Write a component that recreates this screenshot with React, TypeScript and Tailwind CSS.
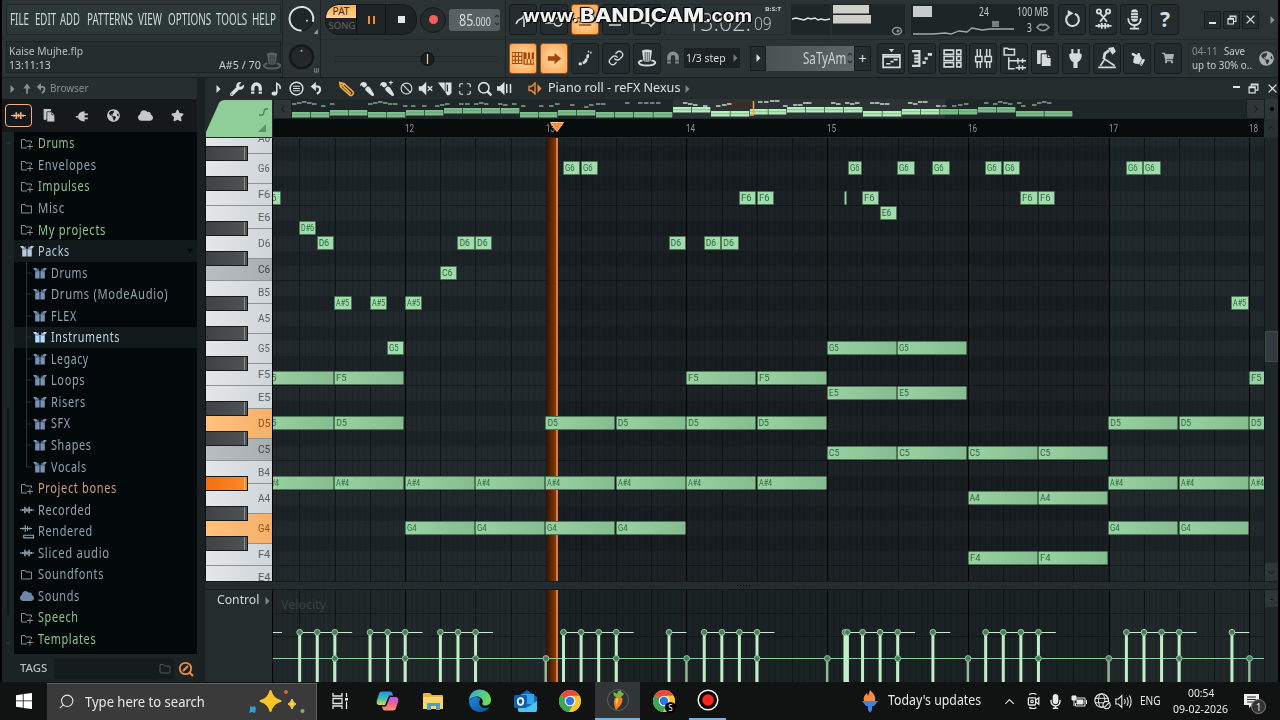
import React, { useLayoutEffect, useRef, useState } from "react";
import {
  Ban,
  ChevronDown,
  ChevronLeft,
  ChevronRight,
  ChevronUp,
  Folder,
  Link,
  Maximize,
  Search,
} from "lucide-react";
import {
  FaCloud,
  FaGlobeAmericas,
  FaHandPointLeft,
  FaMicrophone,
  FaPaintBrush,
  FaShoppingCart,
  FaStar,
  FaWrench,
} from "react-icons/fa";

type FitProps = { w: number; className?: string; children: React.ReactNode };

// Condensed label: scales its text horizontally to fill a fixed width.
function Fit({ w, className = "", children }: FitProps) {
  const ref = useRef<HTMLSpanElement>(null);
  const [scale, setScale] = useState(1);
  useLayoutEffect(() => {
    if (ref.current) setScale(w / ref.current.offsetWidth);
  }, [w]);
  return (
    <span className={`inline-block shrink-0 whitespace-nowrap ${className}`} style={{ width: w }}>
      <span ref={ref} className="inline-block origin-left" style={{ transform: `scaleX(${scale})` }}>
        {children}
      </span>
    </span>
  );
}

type SvgProps = { size?: number; className?: string; children: React.ReactNode };

function Glyph({ size = 20, className = "", children }: SvgProps) {
  return (
    <svg
      width={size}
      height={size}
      viewBox="0 0 20 20"
      fill="none"
      stroke="currentColor"
      strokeWidth="1.6"
      className={`shrink-0 ${className}`}
    >
      {children}
    </svg>
  );
}

const Arrow = ({ className = "" }: { className?: string }) => (
  <svg width="5" height="8" viewBox="0 0 5 8" className={`shrink-0 fill-current ${className}`}>
    <path d="M0.5 0 L4.5 4 L0.5 8Z" />
  </svg>
);

const Magnet = ({ size = 16, className = "" }) => (
  <Glyph size={size} className={className}>
    <path d="M5 17V9a5 5 0 0 1 10 0v8" strokeWidth="4.4" />
    <path d="M2 13.6h6M12 13.6h6" stroke="#22292b" strokeWidth="1.2" />
  </Glyph>
);

const Undo = ({ size = 15 }) => (
  <Glyph size={size}>
    <path d="M7 7h4.500c5 0 6 8-1 11" strokeWidth="3.200" />
    <path d="M9 0v14L1 7Z" fill="currentColor" stroke="none" />
  </Glyph>
);

const Wave = ({ size = 17, className = "" }) => (
  <Glyph size={size} className={className}>
    <path d="M0 10h20" strokeWidth="1.400" />
    <path d="M4 8.500v3M7 5.500v9M10 7.500v5M13 5.500v9M16 8.500v3" strokeWidth="2.200" />
  </Glyph>
);

const Pages = ({ size = 19 }) => (
  <Glyph size={size}>
    <path d="M6 15H3V2h8v2" fill="currentColor" />
    <path d="M6.500 5H13l4 4v9.500H6.500Z" fill="currentColor" stroke="#1b2224" strokeWidth="1" />
    <path d="M13 5v4h4" stroke="#1b2224" strokeWidth="1" />
  </Glyph>
);

const Hat = ({ className = "" }) => (
  <Glyph size={20} className={className}>
    <path d="M5 2.500q5-2 10 0L13.500 13q-3.500 1.500-7 0Z" fill="currentColor" stroke="none" />
    <path d="M8.200 4v9M10.200 4v9.500M12.200 4v9" stroke="#30383a" strokeWidth=".8" />
    <path d="M5.500 12.500C0 13 0 17.500 10 17.500S20 13 14.500 12.500" strokeWidth="2" />
  </Glyph>
);

const Restore = ({ size = 12 }) => (
  <Glyph size={size}>
    <path d="M6 7V2h12v11h-5M2 7h11v11H2Z" strokeWidth="2.2" />
    <path d="M2 8.5h11M6 3.5h12" strokeWidth="2.2" />
  </Glyph>
);

const Cross = ({ size = 12 }) => (
  <Glyph size={size}>
    <path d="M3 3l14 14M17 3L3 17" strokeWidth="2.4" />
  </Glyph>
);

function ToolButton({ active, children }: { active?: boolean; children?: React.ReactNode }) {
  return (
    <div
      className={`flex h-[31px] w-[28px] shrink-0 items-center justify-center rounded-[3px] border ${
        active
          ? "border-[#9c4d12] bg-[radial-gradient(#ffdfa6,#ffa351)] text-[#a34608]"
          : "border-[#171d1f] bg-[#252c2f] text-[#d5dbdc]"
      }`}
    >
      {children}
    </div>
  );
}

const menus: [string, number, number][] = [
  ["FILE", 19, 6],
  ["EDIT", 21, 4],
  ["ADD", 20, 7],
  ["PATTERNS", 46, 5],
  ["VIEW", 24, 6],
  ["OPTIONS", 43, 5],
  ["TOOLS", 31, 5],
  ["HELP", 24, 0],
];

function MenuPanel() {
  return (
    <div className="w-[281px] shrink-0 border-r border-[#1d2426] pl-1">
      <div className="mt-[4px] flex h-[31px] w-[275px] items-center border border-[#1f2728] bg-[#2d3838] pl-[3px] text-[16.5px] leading-none text-[#d3d9d9]">
        {menus.map(([name, w, gap]) => (
          <React.Fragment key={name}>
            <Fit w={w}>{name}</Fit>
            <span className="shrink-0" style={{ width: gap }} />
          </React.Fragment>
        ))}
      </div>
      <div className="mt-[6px] flex h-[32px] w-[275px] items-stretch border border-[#1a2122] bg-[#262d2f] pl-[2px] text-[11px] text-[#c9cfd0]">
        <div className="flex flex-1 flex-col leading-[14px]">
          <Fit w={74} className="mt-[1.500px] text-[#b9bfc0]">Kaise Mujhe.flp</Fit>
          <Fit w={42}>13:11:13</Fit>
        </div>
        <Fit w={42} className="mt-[15.500px] mr-[2px] leading-[14px]">A#5 / 70</Fit>
        <Hat className="mt-[9px] mr-[-2px] ml-[-1px] text-[#5a6163]" />
      </div>
    </div>
  );
}

function Knobs() {
  return (
    <div className="flex w-[38px] shrink-0 flex-col items-center border-r border-[#1d2426]">
      <svg width="36" height="39" viewBox="0 0 36 39">
        <circle cx="17.500" cy="19" r="12" fill="#202729" stroke="#15191a" />
        <path d="M17.500 31A12 12 0 1 1 29 22" fill="none" stroke="#dde2e2" strokeWidth="2" />
        <circle cx="23" cy="21" r="0.9" fill="#fff" />
        <path d="M30 34.5h4v-5Z" fill="#9ba1a2" />
      </svg>
      <svg width="36" height="39" viewBox="0 0 36 39">
        <circle cx="17.500" cy="18" r="15" fill="none" stroke="#3b4244" strokeDasharray="1 3.5" />
        <circle cx="17.500" cy="18" r="11.500" fill="#23292b" stroke="#15191a" strokeWidth="2.500" />
        <circle cx="17.500" cy="12" r="1" fill="#a9afb0" />
        <path d="M30.500 29.500v4h4v-4M32.500 29.500v4" stroke="#7b8183" fill="none" />
      </svg>
    </div>
  );
}

function Transport() {
  return (
    <div className="flex w-[185px] shrink-0 flex-col border-r border-[#1d2426]">
      <div className="flex h-[39px] items-center pl-[4px]">
        <div className="flex h-[31px] w-[92px] overflow-hidden rounded-[14px] border border-[#15191b] bg-[#1e2426]">
          <div className="flex w-[31px] flex-col border-r border-[#111] text-center text-[10px]">
            <span className="h-[13px] rounded-tl-[12px] bg-[linear-gradient(#ffb054,#ffd394)] leading-[13px] text-[#46290b]">
              PAT
            </span>
            <span className="pl-[2px] text-[9.5px] leading-[16px] text-[#60686a]">SONG</span>
          </div>
          <div className="flex w-[29px] items-center justify-center gap-[3px] border-r border-[#111]">
            <i className="h-[8px] w-[2px] bg-[#f58a3a]" />
            <i className="h-[8px] w-[2px] bg-[#f58a3a]" />
          </div>
          <div className="flex flex-1 items-center justify-center">
            <i className="h-[7px] w-[7px] bg-[#e3e7e8]" />
          </div>
        </div>
        <div className="ml-[3px] flex h-[26px] w-[26px] items-center justify-center rounded-full border border-[#14191a] bg-[#252c2e]">
          <i className="h-[9px] w-[9px] rounded-full bg-[#f45e5c]" />
        </div>
        <div className="ml-[3px] flex h-[22px] w-[51px] items-center rounded-[3px] bg-[#576062] pl-[10px] text-[#d8dcdc]">
          <Fit w={14} className="text-[17px] leading-none">85</Fit>
          <Fit w={18} className="mt-[3px] text-[13px] leading-none">.000</Fit>
          <span className="ml-[3px] flex flex-col gap-[2px] text-[#2c3335]">
            <ChevronUp size={6} strokeWidth={5} />
            <ChevronDown size={6} strokeWidth={5} />
          </span>
        </div>
      </div>
      <div className="flex flex-1 items-center border-t border-[#242b2d] pl-[14px]">
        <svg width="162" height="20" viewBox="0 0 162 20">
          <path d="M0 7.500h162M0 12.500h162" stroke="#22292b" />
          <circle cx="92.500" cy="10" r="6.500" fill="#1a1e1f" stroke="#0e1112" />
          <path d="M92.500 5v10" stroke="#e0c2a0" strokeWidth="1.3" />
        </svg>
      </div>
    </div>
  );
}

function UpperTools() {
  return (
    <div className="flex h-[39px] items-center">
      <div className="flex gap-[3px] pl-[3px]">
        <ToolButton><Glyph><path d="M3 14C6 6 9 12 11 5M11 3v14M14 5v8" /></Glyph></ToolButton>
        <ToolButton><Glyph><path d="M1 13h9" /><circle cx="14" cy="12" r="4" /></Glyph></ToolButton>
        <ToolButton active><Glyph><path d="M2 8h16M4 12h12M4 15h12" /></Glyph></ToolButton>
        <ToolButton><Glyph><path d="M3 15h12M8 11h6" /></Glyph></ToolButton>
        <ToolButton><Glyph><path d="M4 13h8M10 12l4 4 4-4" /></Glyph></ToolButton>
      </div>
      <div className="ml-[3px] flex h-[31px] w-[122px] border border-[#252e2f] bg-[#2c3536] text-[#c3cbcc]">
        <Fit w={64} className="mt-[1px] ml-[22px] font-['Open_Sans'] text-[25px] leading-[31px] font-light">13:02:</Fit>
        <Fit w={18} className="mt-[8px] ml-[3px] font-['Open_Sans'] text-[19px] leading-[20px] font-light">09</Fit>
        <span className="relative w-0">
          <Fit w={16} className="absolute top-0 left-[-7px] text-[6px] leading-[8px] font-bold">B:S:T</Fit>
        </span>
      </div>
      <div className="ml-[5px] h-[31px] w-[114px] shrink-0 bg-[#1f2628]">
        <svg width="116" height="31" viewBox="0 0 116 31">
          <path d="M1 15l4-1 4 1 4 1 4-2 3 1 4-1 3 2 3-1 4 1 5-1" fill="none" stroke="#dce1e1" strokeWidth="1.500" />
          <path d="M40 0v31" stroke="#30383a" />
          <path d="M42 1h36v8.500H42zM42 11h38v8.500H42z" fill="#cfd0ca" />
          <ellipse cx="106" cy="27" rx="4.500" ry="3.500" fill="none" stroke="#8e9597" strokeWidth="1.500" />
          <circle cx="107" cy="27" r="1.500" fill="#8e9597" />
        </svg>
      </div>
      <div className="ml-[6px] flex h-[32px] w-[143px] shrink-0 bg-[#1e2526] text-[#c8cecf]">
        <svg width="106" height="32" viewBox="0 0 106 32" className="shrink-0">
          <path d="M2 2h19v11H2z" fill="#c8cbce" />
          <path d="M2 30h20l12-1 6 1 8-3 8 1 5-4 10 2 8-1h24" fill="none" stroke="#a3aaab" strokeWidth="1.300" />
          <path d="M81 17h7v6h-7z" fill="#777e80" />
        </svg>
        <div className="relative w-0">
          <Fit w={10} className="absolute top-0 left-[-38px] text-[12px] leading-[15px]">24</Fit>
        </div>
        <div className="flex w-[36px] flex-col text-[12px] leading-[15px]">
          <Fit w={31}>100 MB</Fit>
          <span className="mt-px flex items-center">
            <Fit w={5} className="ml-[10px]">3</Fit>
            <svg width="14" height="9" viewBox="0 0 14 9" className="ml-[4px]">
              <path d="M1 4.500Q4 0 7 2Q10 0 13 4.500Q7 11 1 4.500Z" fill="none" stroke="#8a9193" strokeWidth="1.700" />
            </svg>
          </span>
        </div>
      </div>
      <div className="ml-[4px] flex gap-[3px]">
        <ToolButton>
          <Glyph size={19}><path d="M6.500 4.500a6.700 6.700 0 1 0 6 -.5" strokeWidth="2.200" /><path d="M5 0v7l6-3.500Z" fill="currentColor" stroke="none" /></Glyph>
        </ToolButton>
        <ToolButton>
          <Glyph size={23}><circle cx="6" cy="3" r="1.800" /><circle cx="14" cy="3" r="1.800" /><path d="M7 4.500l6 7.500M13 4.500L7 12M3 15.500h14M6 14v3M8.500 13v5M11.500 13v5M14 14v3" /></Glyph>
        </ToolButton>
        <ToolButton>
          <Glyph size={23}><rect x="7" y="1" width="6" height="11" rx="3" fill="currentColor" stroke="none" /><path d="M7 4h6M7 6.500h6M7 9h6" stroke="#333" strokeWidth=".7" /><path d="M4.500 9c0 8 11 8 11 0M10 15v3M6 18h8" /></Glyph>
        </ToolButton>
        <ToolButton><span className="text-[21px] leading-none font-bold">?</span></ToolButton>
      </div>
      <div className="ml-[25px] flex items-center gap-[2px] text-[#dfe4e4]">
        <span className="flex h-[18px] w-[17px] items-end justify-center border border-[#181e20] bg-[#252c2e] pb-[4px]"><i className="h-[2px] w-[7px] bg-[#dfe4e4]" /></span>
        <span className="flex h-[18px] w-[17px] items-center justify-center border border-[#181e20] bg-[#252c2e]"><Restore size={10} /></span>
        <span className="flex h-[18px] w-[17px] items-center justify-center border border-[#181e20] bg-[#252c2e]"><Cross size={11} /></span>
      </div>
      <Arrow className="ml-[11px] text-[#8c9395]" />
    </div>
  );
}

function LowerTools() {
  return (
    <div className="flex h-[37px] items-center border-t border-[#242b2d]">
      <div className="flex gap-[3px] pl-[3px]">
        <ToolButton active>
          <Glyph size={22}><path d="M0 5h9v10H0ZM3 5v10M6 5v10M0 8.500h9M0 12h9" strokeWidth="1" /><path d="M11 4.500v11h9v-11" strokeWidth="1.200" /><path d="M11 5h2.300v6H11zM14.500 5h1.800v6h-1.800zM17.800 5H20v6h-2.200z" fill="currentColor" stroke="none" /><path d="M13.800 11v4M17 11v4" strokeWidth="1.200" /></Glyph>
        </ToolButton>
        <ToolButton active>
          <Glyph size={15}><path d="M1 7h9V2.500l9 7.500-9 7.500V13H1Z" fill="currentColor" stroke="none" /></Glyph>
        </ToolButton>
        <ToolButton>
          <Glyph size={18}><path d="M3 16.500h3.500M7.500 15.500q4-1 4-5" strokeWidth="3" /><path d="M11.500 11V6.500l3-1v4Z" fill="currentColor" stroke="none" /><path d="M14 2v2M16.500 3v2" strokeWidth="1.600" /></Glyph>
        </ToolButton>
        <ToolButton><Link size={16} /></ToolButton>
        <ToolButton><Hat /></ToolButton>
      </div>
      <Magnet size={16} className="ml-[4px] text-[#899092]" />
      <div className="ml-[3px] flex h-[20px] w-[56px] items-center bg-[#1c2224] pl-[2px] text-[11.500px] text-[#d6dbdc]">
        <Fit w={40}>1/3 step</Fit>
        <Arrow className="ml-[7px] text-[#727a7c]" />
      </div>
      <div className="ml-[10px] flex h-[25px] items-center">
        <span className="flex h-full w-[16px] items-center justify-center border border-[#171c1e] bg-[#262d2f] text-[#d6dbdc]"><Arrow /></span>
        <span className="flex h-full w-[88px] items-center justify-end bg-[linear-gradient(90deg,#4a5254,#5d6567)] text-[17px] text-[#ccd2d2]">
          <Fit w={43}>SaTyAm</Fit>
          <span className="mr-[1px] ml-[1px] flex flex-col gap-[2px] text-[#2c3335]">
            <ChevronUp size={6} strokeWidth={5} />
            <ChevronDown size={6} strokeWidth={5} />
          </span>
        </span>
        <span className="flex h-full w-[17px] items-center justify-center border border-[#171c1e] bg-[#262d2f] text-[14px] text-[#e0e4e4]">+</span>
      </div>
      <div className="ml-[6px] flex gap-[2.800px]">
        <ToolButton><Glyph size={21}><path d="M2 6.500h16v12H2ZM2 8.500h16" /><path d="M7.500 1h5L10 4Z" fill="currentColor" stroke="none" /><path d="M5 15h4M9 13h3M12 11h4" /></Glyph></ToolButton>
        <ToolButton><Glyph size={21}><path d="M1 3h7v14H1M3 7h5M3 10h5M3 13h5" strokeWidth="2" /><path d="M11 14h3M13 10h3M16 6h4" strokeWidth="2.600" /></Glyph></ToolButton>
        <ToolButton><Glyph size={21}><path d="M2 2h9v4H2ZM2 8h9v4H2ZM2 14h9v4H2ZM14 2h4v4h-4ZM14 8h4v4h-4ZM14 14h4v4h-4Z" strokeWidth="1.500" /></Glyph></ToolButton>
        <ToolButton><Glyph size={21}><path d="M4 1v7M4 13v6M7 1v7M7 13v6M13 1v7M13 13v6M16 1v7M16 13v6M2.500 8h6v5h-6ZM11.500 8h6v5h-6Z" strokeWidth="1.400" /></Glyph></ToolButton>
        <ToolButton><Glyph size={23}><path d="M1 1h3l1 1h5v5H1ZM5 9v10h5M5 12h5M10 12h10M13 9.500v5M17 10v4M11 18h9M14 15.500v5M17 16v4" strokeWidth="1.300" /></Glyph></ToolButton>
        <ToolButton><Pages /></ToolButton>
        <ToolButton>
          <Glyph size={21}><path d="M6 1h2v4h4V1h2v4l2 1q0 6-4 7.500V19H8v-5.500Q4 12 4 6l2-1Z" fill="currentColor" stroke="none" /></Glyph>
        </ToolButton>
        <ToolButton>
          <Glyph size={22}><path d="M2 18.500h16M4 17l4-6 9 6" strokeWidth="1.600" /><path d="M7 11l1-5 4-3" strokeWidth="2.400" /><path d="M11 1l5-1 2 4-3 3-2-3Z" fill="currentColor" stroke="none" /></Glyph>
        </ToolButton>
        <ToolButton><FaHandPointLeft size={15} className="rotate-[28deg]" /></ToolButton>
        <ToolButton><FaShoppingCart size={12} className="text-[#aab1b3]" /></ToolButton>
      </div>
      <div className="ml-[6px] flex h-[31px] w-[89px] items-center border border-[#252d2f] bg-[#2b3435] pl-[3px] text-[11px] text-[#c5cbcc]">
        <div className="flex w-[64px] flex-col leading-[14px]">
          <span className="flex gap-[6px]">
            <Fit w={26} className="text-[#858d8f]">04-11</Fit>
            <Fit w={21}>Save</Fit>
          </span>
          <Fit w={60}>up to 30% o..</Fit>
        </div>
        <FaGlobeAmericas size={15} className="ml-[3px] text-[#a9b0b1]" />
      </div>
    </div>
  );
}

function Watermark() {
  return (
    <div className="absolute top-[4px] left-[523px] z-20 flex items-center text-[#f2f2f2] [text-shadow:0_0_2px_#000,1px_1px_1px_#000,-1px_-1px_1px_#000]">
      <Fit w={56} className="font-['Inter'] text-[18px] leading-[24px] font-bold">www.</Fit>
      <Fit w={124} className="ml-[1px] font-['Inter'] text-[19px] leading-[24px] font-extrabold">BANDICAM</Fit>
      <Fit w={47} className="ml-[1px] font-['Inter'] text-[18px] leading-[24px] font-bold">.com</Fit>
    </div>
  );
}

function Toolbar() {
  return (
    <header className="relative flex h-[78px] shrink-0 border-b border-[#191f21] bg-[#2c3335]">
      <MenuPanel />
      <Knobs />
      <Transport />
      <div className="flex flex-col">
        <UpperTools />
        <LowerTools />
      </div>
    </header>
  );
}

type Item = { name: string; w: number; icon: string; tone?: string; sub?: boolean; last?: boolean };

const green = "text-[#8cc396]";
const items: Item[] = [
  { name: "Drums", w: 37, icon: "add", tone: green },
  { name: "Envelopes", w: 59, icon: "add" },
  { name: "Impulses", w: 52, icon: "add", tone: green },
  { name: "Misc", w: 27, icon: "folder" },
  { name: "My projects", w: 68, icon: "add", tone: green },
  { name: "Packs", w: 32, icon: "pack", tone: "text-[#b5cbe0]" },
  { name: "Drums", w: 37, icon: "pack", sub: true },
  { name: "Drums (ModeAudio)", w: 117, icon: "pack", sub: true },
  { name: "FLEX", w: 26, icon: "pack", sub: true },
  { name: "Instruments", w: 69, icon: "pack", sub: true, tone: "text-[#c3d8ea]" },
  { name: "Legacy", w: 38, icon: "pack", sub: true },
  { name: "Loops", w: 34, icon: "pack", sub: true },
  { name: "Risers", w: 35, icon: "pack", sub: true },
  { name: "SFX", w: 20, icon: "pack", sub: true },
  { name: "Shapes", w: 41, icon: "pack", sub: true },
  { name: "Vocals", w: 36, icon: "pack", sub: true, last: true },
  { name: "Project bones", w: 79, icon: "add", tone: "text-[#cf9c85]" },
  { name: "Recorded", w: 54, icon: "wave" },
  { name: "Rendered", w: 55, icon: "render" },
  { name: "Sliced audio", w: 72, icon: "wave" },
  { name: "Soundfonts", w: 66, icon: "folder" },
  { name: "Sounds", w: 42, icon: "cloud" },
  { name: "Speech", w: 41, icon: "add", tone: green },
  { name: "Templates", w: 58, icon: "add", tone: green },
];

function ItemIcon({ icon }: { icon: string }) {
  if (icon === "pack")
    return (
      <svg width="14" height="12" viewBox="0 0 14 12" className="shrink-0 fill-current">
        <path d="M0 1H3.200L5.500 3.700H2ZM14 1H10.800L8.500 3.700H12Z" />
        <path d="M2.200 4.200H6.600V11.500H2.200ZM7.400 4.200H11.800V11.500H7.400Z" />
        <path d="M4.500 1.500h1.300v2.200h2.400V1.500h1.300v3h-5Z" opacity=".6" />
      </svg>
    );
  if (icon === "wave") return <Wave size={14} />;
  if (icon === "cloud") return <FaCloud size={14} className="text-[#6f86ad]" />;
  if (icon === "render")
    return (
      <Glyph size={15}>
        <path d="M0 6h16M4 4.500v3M7 1.500v9M10 3v6M13 4.500v3M5 15h13v3.500H5Z" />
      </Glyph>
    );
  return (
    <svg width="13" height="13" viewBox="0 0 13 13" fill="none" stroke="#83928f" className="shrink-0">
      <path d={icon === "add" ? "M7 11H1.500V2.500H5L6 4H11.500V6" : "M1.500 2.500H5L6 4H11.500V11H1.500Z"} />
      {icon === "add" && <path d="M7 9.500h6M10 6.500v6" />}
    </svg>
  );
}

function Browser() {
  return (
    <aside className="flex w-[195px] shrink-0 flex-col bg-[#1c2325]">
      <div className="flex h-[21px] items-center bg-[#272e30] pl-[8px] text-[#899092]">
        <Arrow />
        <Glyph size={12} className="ml-[6px]"><path d="M10 18V6" strokeWidth="3" /><path d="M4 9L10 1l6 8Z" fill="currentColor" stroke="none" /></Glyph>
        <span className="mr-[5px] ml-[3px]"><Undo size={11} /></span>
        <Fit w={39} className="ml-[-2px] text-[11px]">Browser</Fit>
      </div>
      <div className="flex h-[33px] items-center bg-[#15191b] pl-[3px] text-[#c3c9ca]">
        <span className="flex h-[23px] w-[27px] items-center justify-center rounded-[4px] border border-[#efb087] text-[#f0b38c]"><Wave size={15} /></span>
        <span className="ml-[10px]"><Pages size={15} /></span>
        <span className="ml-[18px] flex">
          <Glyph size={16}><path d="M1 10h3q0-5 8-6v3h4v2h-4v3h4v2h-4v3q-8-1-8-5H1Z" fill="currentColor" stroke="none" /></Glyph>
        </span>
        <FaGlobeAmericas size={13} className="ml-[16px]" />
        <FaCloud size={15} className="ml-[18px]" />
        <FaStar size={13} className="ml-[18px]" />
      </div>
      <div className="flex flex-1">
        <div className="flex w-[12px] flex-col items-center justify-between py-[7px] text-[#434b4d]">
          <ChevronUp size={8} />
          <i className="mt-auto mb-[24px] h-[207px] w-[2px] bg-[#101517]" />
          <ChevronDown size={8} />
        </div>
        <div className="flex w-[183px] flex-col bg-[#03090a] pt-[0.700px] text-[13.500px] tracking-[0.8px]">
          {items.map((it, i) => (
            <div
              key={i}
              className={`flex h-[21.560px] items-center ${it.tone ?? "text-[#8fa4b0]"} ${
                it.name === "Packs" || it.name === "Instruments" ? "bg-[#12191b]" : ""
              }`}
            >
              {it.sub ? (
                <svg width="19" height="22" viewBox="0 0 19 22" className="shrink-0">
                  <path d={it.last ? "M12.500 0v11h5" : "M12.500 0v22M12.500 11h5"} stroke="#2a3335" fill="none" />
                </svg>
              ) : (
                <span className="w-[6px] shrink-0" />
              )}
              <span className={`flex w-[18px] shrink-0 items-center ${it.sub ? "text-[#7891b5]" : ""} ${it.name === "Instruments" ? "brightness-150" : ""}`}>
                <ItemIcon icon={it.icon} />
              </span>
              <Fit w={it.w}>{it.name}</Fit>
              {it.name === "Packs" && (
                <svg width="6" height="4" viewBox="0 0 6 4" className="mr-[4px] ml-auto fill-[#050708]"><path d="M0 0h6L3 4Z" /></svg>
              )}
            </div>
          ))}
        </div>
      </div>
      <div className="flex h-[28px] items-center bg-[#1c2325] pt-[1px] pl-[18px] text-[#b9c0c1]">
        <Fit w={27} className="text-[10.500px] font-medium">TAGS</Fit>
        <span className="ml-[7px] flex h-[21px] w-[120px] items-center justify-end bg-[#161c1e] pr-[3px]">
          <Folder size={12} className="text-[#525a5c]" />
        </span>
        <svg width="16" height="16" viewBox="0 0 16 16" fill="none" stroke="#f08a3c" className="ml-[4px]">
          <circle cx="7.500" cy="7.500" r="5.700" strokeWidth="1.800" />
          <path d="M5 10l5-5M11.500 11.500l3.500 3.500" strokeWidth="2" />
        </svg>
      </div>
    </aside>
  );
}

function RollHeader() {
  return (
    <div className="flex h-[21px] shrink-0 items-center bg-[#252c2e] pl-[11px] text-[#dbe0e1]">
      <Arrow />
      <div className="ml-[6px] flex">
        {[
          <FaWrench size={14} className="-scale-x-100 rotate-90" />,
          <Magnet size={15} />,
          <Glyph size={16}><path d="M11 15V3c3 2 5 3 4 7" strokeWidth="2" /><ellipse cx="8" cy="15.500" rx="3.500" ry="2.500" fill="currentColor" stroke="none" /></Glyph>,
          <Glyph size={15}><circle cx="10" cy="10" r="8.500" strokeWidth="2" /><path d="M5.500 7h9M5.500 10h9M5.500 13h9" /></Glyph>,
          <Undo size={13} />,
        ].map((icon, i) => (
          <span key={i} className="flex w-[19.800px] items-center justify-center">{icon}</span>
        ))}
      </div>
      <div className="ml-[11px] flex">
        {[
          <Glyph size={17} className="text-[#f0a93c]"><path d="M2 3l5 1 11 10c1 2-2 5-4 4L3 8ZM7 4L3 8M5 6l10 10" strokeWidth="1.900" /></Glyph>,
          <FaPaintBrush size={14} className="-scale-x-100 rotate-180" />,
          <span className="flex"><FaPaintBrush size={14} className="-scale-x-100 rotate-180" /><b className="-mt-[3px] -ml-[5px] text-[8px] leading-none">+</b></span>,
          <Ban size={13} />,
          <Glyph size={15}><path d="M1 7h4l6-6v18l-6-6H1Z" fill="currentColor" stroke="none" /><path d="M13 7l6 6M19 7l-6 6" strokeWidth="2" /></Glyph>,
          <Glyph size={15}><path d="M0 2h9v12Z" fill="currentColor" stroke="none" /><path d="M10 2h8v14l-3 3h-3l-2-4Z" fill="currentColor" stroke="none" /><path d="M12.500 5v9" stroke="#252c2e" /></Glyph>,
          <Maximize size={14} />,
          <Glyph size={16}><circle cx="8.500" cy="8.500" r="6.500" strokeWidth="2" /><path d="M13 13l5 5" strokeWidth="3" /></Glyph>,
          <Glyph size={15}><path d="M0 7h4l6-6v18l-6-6H0Z" fill="currentColor" stroke="none" /><path d="M13 4v12M18 4v12" strokeWidth="2" /></Glyph>,
        ].map((icon, i) => (
          <span key={i} className="flex w-[19.750px] items-center justify-center">{icon}</span>
        ))}
      </div>
      <svg width="14" height="13" viewBox="0 0 14 13" className="ml-[13px] shrink-0">
        <path d="M1 4.500h2.500L7 1v11L3.500 8.500H1Z" fill="none" stroke="#f08a3c" strokeWidth="1.400" />
        <path d="M9.500 2l4 4.500-4 4.500Z" fill="#f08a3c" />
      </svg>
      <Fit w={132} className="ml-[6px] pb-px text-[12.500px] leading-[18px]">Piano roll - reFX Nexus</Fit>
      <Arrow className="ml-[5px] text-[#7d8587]" />
      <div className="mr-[1px] ml-auto flex translate-x-px items-center gap-[8px]">
        <i className="mb-[3px] h-[2px] w-[7px] bg-[#dfe4e4]" />
        <Restore size={11} />
        <Cross size={11} />
      </div>
    </div>
  );
}

// [x, width, y] of each chord pair in the song overview
const overview = [
  [0, 38, 13], [38, 38, 11], [76, 38, 13], [114, 38, 11], [152, 38, 9], [190, 38, 9],
  [228, 38, 13], [266, 38, 11], [304, 38, 13], [342, 39, 13], [381, 38, 8], [419, 39, 12],
  [458, 37, 10], [495, 38, 8], [533, 38, 8], [571, 39, 12], [610, 38, 10], [648, 38, 10],
  [686, 38, 8], [724, 57, 12],
];

const overviewDashes = [
  [0, 6], [5, 5], [10, 4], [15, 5], [20, 6], [29, 8], [38, 6], [76, 6], [81, 5], [86, 4], [91, 5], [96, 6], [101, 6],
  [111, 8], [119, 8], [130, 8], [143, 8], [148, 7], [153, 6], [167, 6], [173, 6], [182, 6], [187, 5], [192, 6],
  [206, 6], [211, 7], [220, 6], [229, 8], [247, 8], [257, 8], [263, 6], [278, 7], [292, 9], [297, 7],
  [304, 6], [309, 6], [333, 5], [346, 5], [352, 5], [358, 5], [364, 5], [391, 5], [396, 6], [401, 7], [411, 8], [424, 8],
  [430, 7], [435, 6], [466, 4], [472, 4], [478, 3], [483, 3], [491, 8], [501, 7], [506, 7], [511, 5], [515, 5],
  [539, 5], [544, 6], [553, 5], [558, 6], [563, 5], [578, 5], [583, 5], [588, 6], [593, 6], [616, 5], [621, 6], [626, 4],
  [631, 4], [644, 8], [650, 8], [660, 8], [666, 7], [672, 6], [692, 5], [701, 6], [706, 4], [711, 5], [716, 6],
  [725, 5], [729, 8], [740, 7], [745, 5], [750, 4], [755, 5],
];

function Overview() {
  return (
    <div className="flex h-[20px] shrink-0 bg-[#1b2223]">
      <span className="flex w-[19px] items-center justify-center border border-[#191e20] bg-[#303638] text-[#0f1314]"><ChevronLeft size={12} /></span>
      <svg width="954" height="20" viewBox="0 0 954 20" className="shrink-0">
        <rect width="954" height="20" fill="#1f2627" />
        <rect x="381" width="272" height="19" fill="#2c3335" />
        <path d="M435 2h24v8h-24z" fill="#4c2616" opacity=".4" />
        {overview.map(([x, w, y]) => (
          <g key={x} fill={x > 375 && x < 648 ? "#b5edbd" : "#7dbd8c"}>
            <rect x={x} y={y} width={w / 2 - 0.7} height="5.500" />
            <rect x={x + w / 2} y={y} width={w / 2 - 0.7} height="5.500" />
            <path d={`M${x} ${y + 2.7}h${w}`} stroke="#579069" strokeWidth=".5" />
          </g>
        ))}
        {overviewDashes.map(([x, y]) => (
          <path key={x} d={`M${x} ${y - 1}h4.500`} stroke={x > 375 && x < 648 ? "#e4f5e6" : "#8fbd9a"} strokeWidth="1.300" />
        ))}
        <path d="M461.500 2v14M458 16h4" stroke="#f0a53c" strokeWidth="1.500" />
      </svg>
      <span className="flex w-[19px] items-center justify-center border border-[#191e20] bg-[#303638] text-[#0f1314]"><ChevronRight size={12} /></span>
      <span className="flex flex-1 items-center justify-center bg-[#303638]"><i className="h-[4px] w-[4px] rounded-full bg-black" /></span>
    </div>
  );
}

const STEP = 17.59;
const stepX = (t: number) => 132 + t * STEP;

function Ruler() {
  return (
    <div className="relative flex h-[18px] shrink-0 bg-[#080c0d] font-['Roboto'] text-[10px] text-[#8b9294]">
      {[12, 13, 14, 15, 16, 17, 18].map((bar, i) => (
        <span key={bar} className="absolute top-[2px] leading-[16px]" style={{ left: stepX(i * 8) }}>
          <Fit w={9}>{bar}</Fit>
        </span>
      ))}
      <svg width="14" height="11" viewBox="0 0 14 11" className="absolute top-[2px] left-[277px]">
        <path d="M.5 1.500h13L7 10.500Z" fill="#ff8a35" stroke="#ffc48f" />
      </svg>
      <span className="ml-auto flex w-[14px] items-center justify-center bg-[#2a3032] text-[#0f1314]"><ChevronUp size={10} /></span>
    </div>
  );
}

const names = ["C", "C#", "D", "D#", "E", "F", "F#", "G", "G#", "A", "A#", "B"];
const noteName = (m: number) => names[m % 12] + (Math.floor(m / 12) - 1);
const rowY = (m: number) => 22.5 + (91 - m) * 15;

const whiteKeys: [string, number][] = [
  ["A6", 30], ["G6", 30], ["F6", 22.5], ["E6", 22.5], ["D6", 30], ["C6", 22.5], ["B5", 22.5], ["A5", 30], ["G5", 30],
  ["F5", 22.5], ["E5", 22.5], ["D5", 30], ["C5", 22.5], ["B4", 22.5], ["A4", 30], ["G4", 30], ["F4", 22.5], ["E4", 22.5],
];
const blackKeys = [92, 90, 87, 85, 82, 80, 78, 75, 73, 70, 68, 66];

function keyTone(name: string) {
  if (name === "D5" || name === "G4") return "bg-[linear-gradient(90deg,#ffc27c,#f6b06a)] text-[#8a5420]";
  if (name[0] === "C") return "bg-[linear-gradient(90deg,#b9bec2,#a7adb1)] text-[#3f4548]";
  return "bg-[linear-gradient(90deg,#e3e7ea,#d0d5d9)] text-[#5b6063]";
}

function Keyboard() {
  return (
    <div className="relative h-[443px] w-[67px] shrink-0 overflow-hidden border-l border-[#0c1011]">
      <div className="-mt-[14.500px] flex flex-col">
        {whiteKeys.map(([name, h]) => (
          <div
            key={name}
            className={`flex shrink-0 items-center justify-end border-b border-[#8d9296] pt-[2px] pr-[2px] font-['Roboto'] text-[11px] leading-[12px] ${keyTone(name)}`}
            style={{ height: h }}
          >
            <Fit w={12}>{name}</Fit>
          </div>
        ))}
      </div>
      {blackKeys.map((m) => (
        <div
          key={m}
          className={`absolute left-0 h-[15px] w-[42px] border-y border-r border-[#17191a] ${
            m === 70 ? "bg-[linear-gradient(100deg,#ee7012,#ff8a2b)]" : "bg-[linear-gradient(100deg,#3f4244,#505355)]"
          }`}
          style={{ top: rowY(m) + 0.5 }}
        >
          <div className={`mr-[2px] h-full border-r ${m === 70 ? "border-[#ffc08a]" : "border-[#8d9091]"}`} />
        </div>
      ))}
    </div>
  );
}

type Note = [midi: number, start: number, length?: number];

const lead: Note[] = [
  [89, -8], [87, -6], [86, -5], [82, -4], [82, -2], [79, -1], [82, 0], [84, 2], [86, 3], [86, 4],
  [91, 9], [91, 10], [86, 15], [86, 17], [86, 18], [89, 19], [89, 20], [89, 25, 0.18], [91, 25.18, 0.85],
  [89, 26], [88, 27], [91, 28], [91, 30], [91, 33], [91, 34], [89, 35], [89, 36], [91, 41], [91, 42], [82, 47],
];

const chordRows: [number, number[]][] = [
  [79, [24, 28]],
  [77, [-8, -4, 16, 20, 48]],
  [76, [24, 28]],
  [74, [-8, -4, 8, 12, 16, 20, 40, 44, 48]],
  [72, [24, 28, 32, 36]],
  [70, [-8, -4, 0, 4, 8, 12, 16, 20, 40, 44, 48]],
  [69, [32, 36]],
  [67, [0, 4, 8, 12, 40, 44]],
  [65, [32, 36]],
];

const notes: Note[] = [
  ...lead,
  ...chordRows.flatMap(([m, starts]) => starts.map((s): Note => [m, s, 4])),
];

// Bars 13 to 16 form a darker block than their neighbours.
function GridLines() {
  return (
    <>
      <div className="absolute inset-y-0 left-[273px] w-[563px] bg-black/15" />
      <div className="absolute inset-0 bg-[repeating-linear-gradient(90deg,rgba(0,0,0,0.16)_0_1px,transparent_1px_5.863px)] bg-[position:-8.700px_0]" />
      <div className="absolute inset-0">
        {Array.from({ length: 29 }, (_, i) => (
          <i
            key={i}
            className={`absolute inset-y-0 w-px ${i % 4 === 3 ? "bg-black" : "bg-[#0f1516]"}`}
            style={{ left: Math.round(stepX((i - 3) * 2)) }}
          />
        ))}
      </div>
    </>
  );
}

function Playhead() {
  return (
    <div className="absolute inset-y-0 left-[273px] w-[12px] border-r-2 border-[#e07c38] bg-[linear-gradient(90deg,#2a1408,#8a3806)]" />
  );
}

function NoteGrid() {
  return (
    <div className="relative h-[443px] w-[991px] shrink-0 overflow-hidden bg-[#22292c]">
      {Array.from({ length: 32 }, (_, i) => 93 - i).map((m) => (
        <div
          key={m}
          className={`absolute inset-x-0 h-[15px] ${names[m % 12].length > 1 ? "bg-[#1c2326]" : ""} ${
            m % 12 === 0 || m % 12 === 5 ? "border-b border-[#151b1d]" : ""
          }`}
          style={{ top: rowY(m) }}
        />
      ))}
      <GridLines />
      <Playhead />
      {notes.map(([m, start, len = 1], i) => (
        <div
          key={i}
          className={`absolute h-[14px] overflow-hidden rounded-[1px] border border-[#4c7656] pl-[1px] font-['Roboto'] text-[8.500px] leading-[12px] text-[#2a6840] ${
            len > 1 ? "bg-[linear-gradient(90deg,#9bd2a3,#86bd90)]" : "bg-[#a2dcac]"
          }`}
          style={{ left: stepX(start) - 0.3, top: rowY(m) + 0.4, width: len * STEP - 0.3 }}
        >
          {len > 0.5 && <Fit w={noteName(m).length > 2 ? 13.5 : 10}>{noteName(m)}</Fit>}
        </div>
      ))}
    </div>
  );
}

const upper = [
  -6, -5, -4, -2, -1, 0, 2, 3, 4, 9, 10, 11, 12, 15, 17, 18, 19, 20, 25, 25.14, 26, 27, 28, 30, 33, 34, 35, 36, 41, 42,
  43, 44, 47,
];
const lower = [-4, 0, 4, 8, 12, 16, 20, 24, 28, 32, 36, 40, 44, 48];

function Velocity() {
  return (
    <div className="relative h-[92px] w-[991px] shrink-0 overflow-hidden bg-[#20282a]">
      <div className="absolute inset-x-0 top-[23px] h-[24px] border-y border-[#161c1e]" />
      <GridLines />
      <Playhead />
      <span className="absolute top-[1px] left-[8px]">
        <Fit w={45} className="text-[12.500px] text-[#394143]">Velocity</Fit>
      </span>
      <svg width="991" height="92" viewBox="0 0 991 92" className="absolute inset-0">
        <path d="M0 68.500H991" stroke="#8fcf9d" />
        <path d="M0 42.500h9" stroke="#c9edcf" />
        {lower.map((t) => (
          <path key={t} d={`M${stepX(t)} 68V92`} stroke="#93b79a" strokeWidth="2.500" />
        ))}
        {upper.map((t) => (
          <g key={t}>
            <path d={`M${stepX(t)} 42.500h${STEP}`} stroke="#c9edcf" />
            <path d={`M${stepX(t) + 0.2} 42V92`} stroke="#c2edc9" strokeWidth="3" />
            <circle cx={stepX(t) + 0.2} cy="42.300" r="2.900" fill="#4d7a5c" stroke="#8fc99c" />
          </g>
        ))}
        {lower.map((t) => (
          <circle key={t} cx={stepX(t) + 0.2} cy="68.500" r="2.900" fill="#4d7a5c" stroke="#8fc99c" />
        ))}
      </svg>
    </div>
  );
}

function PianoRoll() {
  return (
    <main className="ml-[8px] flex w-[1073px] shrink-0 flex-col bg-[#252c2e]">
      <RollHeader />
      <div className="flex h-[39px]">
        <svg width="68" height="39" viewBox="0 0 68 39" className="shrink-0">
          <path d="M1 38V33L14 4Q16 1 20 1H67V38Z" fill="#8fcd99" />
          <path d="M54 16h3c3 0 1-6 4-6h2" stroke="#4a7d56" strokeWidth="1.300" fill="none" />
          <path d="M53 33l8-8v8Z" fill="#5e9069" />
        </svg>
        <div className="flex w-[1005px] flex-col">
          <Overview />
          <Ruler />
        </div>
      </div>
      <div className="flex h-[443px]">
        <Keyboard />
        <i className="w-px bg-black" />
        <NoteGrid />
        <div className="flex w-[14px] flex-col border-l border-[#11171a] bg-[#202729]">
          <i className="mt-[193px] h-[31px] border border-[#434a4c] bg-[#33393c]" />
          <span className="mt-auto flex h-[18px] items-center justify-center bg-[#303638] text-[#0d1112]"><ChevronDown size={11} /></span>
        </div>
      </div>
      <div className="flex h-[9px] items-center justify-center gap-[2px] border-y border-[#151b1c] pl-[4px]">
        {[0, 1, 2, 3, 4].map((i) => <i key={i} className="h-px w-px bg-black" />)}
      </div>
      <div className="flex h-[92px]">
        <div className="flex w-[67px] items-start pt-[1px] pl-[12px] text-[12.500px] text-[#d2d7d8]">
          <Fit w={42}>Control</Fit>
          <Arrow className="mt-[6px] ml-[6px] text-[#81898b]" />
        </div>
        <i className="w-px bg-black" />
        <Velocity />
        <div className="w-[14px] border-l border-[#11171a] bg-[#202729]">
          <span className="flex h-[17px] items-center justify-center bg-[#303638] text-[10px] text-black">-</span>
        </div>
      </div>
    </main>
  );
}

function ChromeLogo() {
  return (
    <svg width="24" height="24" viewBox="0 0 24 24">
      <circle cx="12" cy="12" r="11" fill="#f9c52b" />
      <path d="M12 12L2.500 6.500A11 11 0 0 1 21.500 6.500L12 7Z" fill="#e94a3b" />
      <path d="M2.500 6.500A11 11 0 0 0 11 23L16 14.500 12 12Z" fill="#3aa757" />
      <path d="M12 7h9.500A11 11 0 0 1 11 23l5-8.500Z" fill="#f9c52b" />
      <circle cx="12" cy="12" r="5.300" fill="#fff" />
      <circle cx="12" cy="12" r="4.200" fill="#2f74e8" />
    </svg>
  );
}

function TaskIcons() {
  return (
    <div className="flex h-full items-center">
      <span className="flex w-[45px] justify-center">
        <svg width="18" height="18" viewBox="0 0 18 18" fill="none" stroke="#e6e6e6" strokeWidth="1.300">
          <path d="M2 1v3h9V1M2 6.500h9v5H2ZM2 17v-3h9v3M15.500 1v4M15.500 9.500v7.500" />
          <path d="M14 6h3v2.500h-3z" fill="#e6e6e6" stroke="none" />
        </svg>
      </span>
      <span className="flex w-[51px] justify-center">
        <svg width="23" height="22" viewBox="0 0 23 22">
          <defs>
            <linearGradient id="cpA" x1="0" y1="0" x2="0" y2="1"><stop stopColor="#2b8df0" /><stop offset=".55" stopColor="#3fc3a2" /><stop offset="1" stopColor="#e8d24a" /></linearGradient>
            <linearGradient id="cpB" x1="0" y1="0" x2="0" y2="1"><stop stopColor="#b45cf0" /><stop offset=".5" stopColor="#f0609a" /><stop offset="1" stopColor="#fa9a5e" /></linearGradient>
          </defs>
          <path d="M6 1.500h8c2 0 2.500 2 3 4h-4l-4 9.500H4c-3 0-4-2-3-5L3 4c.6-1.800 1.500-2.500 3-2.500Z" fill="url(#cpA)" />
          <path d="M17 20.500H9c-2 0-2.500-2-3-4h4L14 7h5c3 0 4 2 3 5l-2 6c-.6 1.800-1.500 2.500-3 2.500Z" fill="url(#cpB)" />
        </svg>
      </span>
      <span className="flex w-[40px] justify-center">
        <svg width="22" height="19" viewBox="0 0 22 19">
          <path d="M1 2q0-1 1-1h6l2 2h10q1 0 1 1v13H1Z" fill="#e8b53d" />
          <path d="M1 5h20v12H1Z" fill="#fbd769" />
          <path d="M5 18v-7h13v7h-4v-4H9v4Z" fill="#4a9fd0" />
        </svg>
      </span>
      <span className="flex w-[53px] justify-center">
        <svg width="24" height="24" viewBox="0 0 24 24">
          <defs>
            <linearGradient id="edge" x1="0" y1="0" x2="1" y2=".3"><stop stopColor="#2aa9e4" /><stop offset="1" stopColor="#6bdc58" /></linearGradient>
            <linearGradient id="edgeLow" x1="0" y1="0" x2="1" y2="1"><stop stopColor="#1d86dc" /><stop offset="1" stopColor="#0d4f9c" /></linearGradient>
          </defs>
          <path d="M1 12C1 19 6 23 12 23c4 0 8-2 9.500-5-3 1.500-7 1.500-9-1s-1.500-5 0-7Q7 5 1 12Z" fill="url(#edgeLow)" />
          <path d="M1 12A11 11 0 0 1 23 11c0 4-3 5.500-6 5.500-2 0-3.500-1-2.500-2.500C16 9.500 11 7 8 7.500 4 8 1.500 10 1 12Z" fill="url(#edge)" />
        </svg>
      </span>
      <span className="flex w-[39px] justify-center">
        <svg width="25" height="24" viewBox="0 0 25 24">
          <path d="M5 8L14 1l10 7v13q0 2-2 2H7q-2 0-2-2Z" fill="#0f6cbd" />
          <path d="M8 5h13v10H8Z" fill="#36a5ec" />
          <path d="M5 12l10 6 9-6v9q0 2-2 2H7q-2 0-2-2Z" fill="#4cc2f5" />
          <rect x="1" y="6" width="13" height="13" rx="1.500" fill="#0b5fb5" />
          <ellipse cx="7.500" cy="12.500" rx="2.800" ry="3.300" fill="none" stroke="#fff" strokeWidth="1.700" />
        </svg>
      </span>
      <span className="flex w-[50px] justify-center"><ChromeLogo /></span>
      <span className="flex h-full w-[45px] items-center justify-center border-b-2 border-[#75b2e2] bg-[#333637]">
        <svg width="24" height="24" viewBox="0 0 24 24">
          <circle cx="12" cy="12" r="10.500" fill="#2c3334" stroke="#5a6364" />
          <path d="M8.500 11c1.500-3 7-3 8 0 0 4-3 8-6.500 11C8 19 7.500 14 8.500 11Z" fill="#f58220" />
          <path d="M9.500 12c.5-2 2.500-2 3-1l-2 7Z" fill="#ffc36b" />
          <path d="M11.500 9.500C8 9 7 6 7.500 4c1.500.5 3 1 3.500 2.500C11 3.500 13 2 15 2.500c0 2 1.500 2 3 3-1.500 3-3.500 4-6.500 4Z" fill="#7db83a" />
        </svg>
      </span>
      <span className="relative flex w-[47px] justify-center">
        <ChromeLogo />
        <span className="absolute top-[13px] left-[25px] flex h-[11px] w-[11px] items-center justify-center rounded-full bg-black text-[8px] leading-none text-white">S</span>
      </span>
      <span className="ml-[2px] flex h-full w-[37px] items-center justify-center border-b-2 border-[#75b2e2]">
        <svg width="22" height="22" viewBox="0 0 22 22">
          <circle cx="11" cy="11" r="9.800" fill="#080808" stroke="#f2f2f2" strokeWidth="1.500" />
          <circle cx="11" cy="11" r="5.800" fill="#f5271e" />
        </svg>
      </span>
    </div>
  );
}

function Taskbar() {
  return (
    <footer className="flex h-[38px] shrink-0 items-center bg-[#111212] text-[#e8e8e8]">
      <span className="flex w-[47px] justify-center">
        <svg width="16" height="16" viewBox="0 0 16 16" fill="#fff">
          <path d="M0 2.200L6.800 1.200V7.500H0ZM7.600 1.100L16 0V7.500H7.600ZM0 8.300H6.800V14.800L0 13.800ZM7.600 8.300H16V16L7.600 14.900Z" />
        </svg>
      </span>
      <div className="flex h-[37px] w-[270px] shrink-0 items-center self-end border-t border-r border-[#606060] bg-[#3a3a3a] pb-[1px]">
        <Search size={17} strokeWidth={1.500} className="ml-[11px] -scale-x-100" />
        <Fit w={120} className="ml-[10px] text-[14px]">Type here to search</Fit>
        <svg width="56" height="26" viewBox="0 0 56 26" className="ml-[44px]">
          <path d="M21.500 2q2 8 10 10-8 2-10 10-2-8-10-10 8-2 10-10Z" fill="#fbc623" stroke="#fbc623" strokeWidth="2" strokeLinejoin="round" />
          <path d="M43 10q1 4 4 5-3 1-4 5-1-4-4-5 3-1 4-5Z" fill="#fbd04c" stroke="#fbd04c" />
          <path d="M1 17l3 1 2-1 1 3-1 4-3-1-3 1 1-3Z" fill="#2c9fe0" />
          <circle cx="37" cy="3" r="2" fill="#e2622f" />
          <circle cx="53.500" cy="22" r="2" fill="#86b84c" />
        </svg>
      </div>
      <TaskIcons />
      <div className="ml-auto flex h-full w-[421px] shrink-0 items-center">
        <svg width="18" height="23" viewBox="0 0 18 23" className="ml-[2px]">
          <path d="M9 0C13 4 15 6 14 11H3C2 7 4 5 6 3l1 3Z" fill="#f68b4a" />
          <path d="M1 11h16l-4 5h-2v4l-2 3-2-3v-4H5Z" fill="#3c83e6" />
        </svg>
        <Fit w={93} className="ml-[9px] pb-[1px] text-[13.500px]">Today's updates</Fit>
        <ChevronUp size={15} className="ml-[21px]" />
        <Glyph size={16} className="ml-[9px]"><rect x="3" y="6" width="9" height="9" rx="1" /><path d="M12 9l4-3v8l-4-3M4 2q5-3 9 0M4 18q5 3 9 0" /><circle cx="7.500" cy="10.500" r="1.500" /></Glyph>
        <FaMicrophone size={15} className="ml-[6px]" />
        <svg width="16" height="12" viewBox="0 0 16 12" fill="none" stroke="currentColor" className="ml-[8px]">
          <path d="M4.500 4v-1h9.500v8H4.500V8M15.500 5v4" /><path d="M6 5h6v4H6zM1 1h4v4H1z" fill="currentColor" /><path d="M3 5v6" />
        </svg>
        <Glyph size={18} className="ml-[7px]"><circle cx="8.500" cy="9.500" r="7.500" strokeWidth="1.300" /><ellipse cx="8.500" cy="9.500" rx="3.500" ry="7.500" strokeWidth="1.100" /><path d="M1 7h15M1 12h15" strokeWidth="1.100" /><circle cx="14" cy="14.500" r="4" fill="#111212" strokeWidth="1.300" /><path d="M11.500 17l5-5" strokeWidth="1.300" /></Glyph>
        <Glyph size={17} className="ml-[3px]"><path d="M1 7h3l4-4v14l-4-4H1Z" strokeWidth="1.300" /><path d="M11 7q2 3 0 6M14 5q3 5 0 10M17 3q4 7 0 14" strokeWidth="1.300" /></Glyph>
        <Fit w={21} className="ml-[8px] text-[12px]">ENG</Fit>
        <div className="ml-[11px] flex w-[57px] flex-col items-center text-[11.500px] leading-[16px]">
          <Fit w={26}>00:54</Fit>
          <Fit w={55}>09-02-2026</Fit>
        </div>
        <span className="relative ml-[14px] flex">
          <svg width="17" height="16" viewBox="0 0 17 16">
            <path d="M1 1h15v11H9l-3 3v-3H1Z" fill="#f0f0f0" />
            <path d="M4 4h9M4 6.500h9M4 9h6" stroke="#222" strokeWidth="1.100" />
          </svg>
          <span className="absolute top-[6px] left-[8px] flex h-[15px] w-[15px] items-center justify-center rounded-full border border-[#808080] bg-[#333] text-[10px] leading-none">1</span>
        </span>
      </div>
    </footer>
  );
}

export default function App() {
  return (
    <div className="relative flex h-[720px] w-[1280px] flex-col overflow-hidden bg-black font-['Noto_Sans','Open_Sans',sans-serif]">
      <div className="flex h-[682px] flex-col overflow-hidden pr-[2px] pl-[2px]">
        <Toolbar />
        <div className="flex h-[604px] bg-[#1b2123]">
          <Browser />
          <PianoRoll />
        </div>
      </div>
      <Watermark />
      <Taskbar />
    </div>
  );
}
